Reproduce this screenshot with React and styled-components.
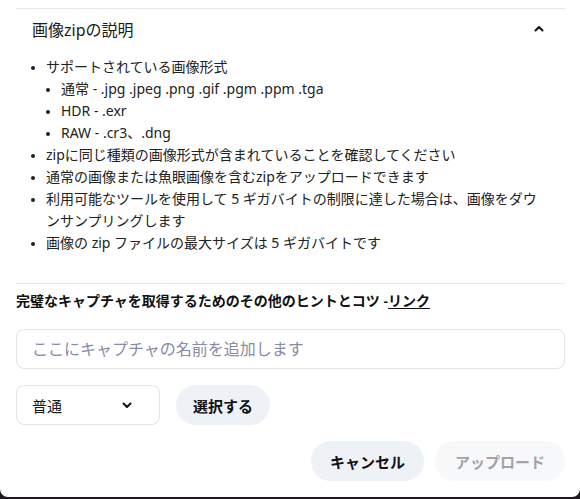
import React from 'react'
import styled, { createGlobalStyle } from 'styled-components'

const GlobalStyle = createGlobalStyle`
  html, body {
    margin: 0;
    padding: 0;
    background: #1c1a1c;
  }
  body {
    font-family: "Noto Sans", "Noto Sans CJK JP", sans-serif;
    color: #1a1a1a;
  }
`;

const Dialog = styled.div`
  height: 497px;
  box-sizing: border-box;
  background: #fff;
  border-radius: 0 0 8px 8px;
  padding: 8px 15px 0 16px;
  display: flex;
  flex-direction: column;
`;

const Accordion = styled.section`
  border-top: 1px solid #e6e6ee;
  border-bottom: 1px solid #e6e6ee;
  padding-bottom: 29px;
`;

const AccordionHeader = styled.button`
  all: unset;
  box-sizing: border-box;
  width: 100%;
  height: 39px;
  display: flex;
  align-items: center;
  justify-content: space-between;
  padding: 0 20px 0 16px;
  font-size: 16px;
  color: #1a1a1a;
  cursor: pointer;
`;

const List = styled.ul`
  margin: 8px 20px 0 0;
  padding-left: ${p => (p.$nested ? '15px' : '30px')};
  font-size: 14px;
  line-height: 22px;
  color: #222;
  list-style: disc;
  & & {
    margin: 0;
  }
  li::marker {
    font-size: 11px;
  }
`;

const Item = styled.li`
  padding-left: 0;
`;

const Hint = styled.p`
  margin: 8px 0 0;
  font-size: 14px;
  font-weight: 600;
  line-height: 18px;
  color: #111;
`;

const HintLink = styled.a`
  color: #111;
  text-decoration: underline;
  text-underline-offset: 2px;
`;

const NameInput = styled.input`
  margin-top: 19px;
  height: 40px;
  box-sizing: border-box;
  border: 1px solid #e3e3ec;
  border-radius: 8px;
  padding: 0 15px;
  font-family: inherit;
  font-size: 16px;
  outline: none;
  &::placeholder {
    color: #868ba6;
  }
`;

const Row = styled.div`
  display: flex;
  align-items: center;
  gap: ${p => p.$gap || '16px'};
  justify-content: ${p => (p.$end ? 'flex-end' : 'flex-start')};
  margin-top: 16px;
`;

const Select = styled.div`
  width: 144px;
  height: 40px;
  box-sizing: border-box;
  border: 1px solid #e3e3ec;
  border-radius: 8px;
  display: flex;
  align-items: center;
  justify-content: space-between;
  padding: 0 26px 0 15px;
  font-size: 15px;
  color: #1a1a1a;
`;

const Button = styled.button`
  height: 40px;
  border: none;
  border-radius: 20px;
  padding: 0 ${p => p.$px || '15px'};
  font-family: inherit;
  font-size: 15px;
  font-weight: 700;
  background: ${p => (p.$disabled ? '#f7f8fa' : '#eef1f6')};
  color: ${p => (p.$disabled ? '#a3a3a6' : '#111')};
  cursor: ${p => (p.$disabled ? 'default' : 'pointer')};
`;

const Chevron = ({ up }) => (
  <svg width="12" height="12" viewBox="0 0 12 12" fill="none">
    <path
      d={up ? 'M2.5 7.5 6 4l3.5 3.5' : 'M2.5 4.5 6 8l3.5-3.5'}
      stroke="#111"
      strokeWidth="2"
      strokeLinecap="round"
      strokeLinejoin="round"
    />
  </svg>
);

const App = () => {
  return (
    <>
      <GlobalStyle />
      <Dialog>
        <Accordion>
          <AccordionHeader>
            <span>画像zipの説明</span>
            <Chevron up />
          </AccordionHeader>
          <List>
            <Item>
              サポートされている画像形式
              <List $nested>
                <Item>通常 - .jpg .jpeg .png .gif .pgm .ppm .tga</Item>
                <Item>HDR - .exr</Item>
                <Item>RAW - .cr3、.dng</Item>
              </List>
            </Item>
            <Item>zipに同じ種類の画像形式が含まれていることを確認してください</Item>
            <Item>通常の画像または魚眼画像を含むzipをアップロードできます</Item>
            <Item>利用可能なツールを使用して 5 ギガバイトの制限に達した場合は、画像をダウンサンプリングします</Item>
            <Item>画像の zip ファイルの最大サイズは 5 ギガバイトです</Item>
          </List>
        </Accordion>

        <Hint>
          完璧なキャプチャを取得するためのその他のヒントとコツ -<HintLink href="#">リンク</HintLink>
        </Hint>

        <NameInput placeholder="ここにキャプチャの名前を追加します" />

        <Row>
          <Select>
            <span>普通</span>
            <Chevron />
          </Select>
          <Button $px="17px">選択する</Button>
        </Row>

        <Row $end $gap="11px">
          <Button $px="19px">キャンセル</Button>
          <Button $px="20px" $disabled>アップロード</Button>
        </Row>
      </Dialog>
    </>
  )
}

export default App
